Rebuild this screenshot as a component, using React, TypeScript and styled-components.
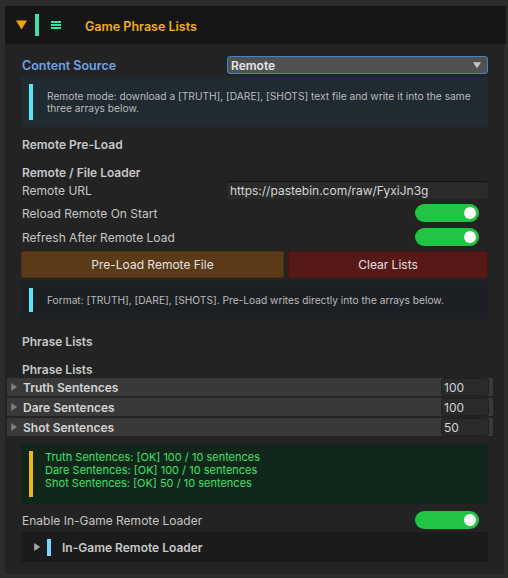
import styled, { createGlobalStyle } from "styled-components";

const Global = createGlobalStyle`
  html, body {
    margin: 0;
    padding: 0;
    background: #2c2c2c;
  }
  body {
    font-family: Inter, "Noto Sans", "Liberation Sans", sans-serif;
    -webkit-font-smoothing: antialiased;
  }
`

const Page = styled.div`
  width: 508px;
  height: 578px;
  padding: 6px 0 0 5px;
  box-sizing: border-box;
  display: flex;
  align-items: flex-start;
`

const Panel = styled.div`
  width: 499px;
  display: flex;
  flex-direction: column;
`

const Header = styled.div`
  height: 38px;
  width: 501px;
  background: #161616;
  display: flex;
  align-items: center;
`

const HeaderIcon = styled.svg`
  margin-left: 11px;
  flex: none;
`

const AccentBar = styled.div<{ $color: string; $h: number }>`
  width: 4px;
  height: ${p => p.$h}px;
  background: ${p => p.$color};
  flex: none;
`

const Burger = styled.div`
  width: 10px;
  height: 8px;
  margin-left: 12px;
  display: flex;
  flex-direction: column;
  justify-content: space-between;
  span {
    display: block;
    height: 2px;
    background: #3fe0a2;
  }
`

const Title = styled.div`
  margin-left: 24px;
  padding-top: 2px;
  color: #f3ae16;
  font-size: 12.5px;
  font-weight: 600;
`

const Body = styled.div`
  background: #232323;
  padding: 12px 16px 12px 16px;
  display: flex;
  flex-direction: column;
`

const FieldRow = styled.div<{ $top?: number }>`
  display: grid;
  grid-template-columns: 206px 1fr;
  align-items: center;
  height: 18px;
  margin-top: ${p => p.$top ?? 0}px;
`

const Label = styled.div<{ $accent?: boolean }>`
  font-size: ${p => (p.$accent ? 12.5 : 12)}px;
  font-weight: ${p => (p.$accent ? 600 : 400)};
  color: ${p => (p.$accent ? "#6fa2e6" : "#c6c6c6")};
  padding-left: 1px;
  white-space: nowrap;
`

const Dropdown = styled.div`
  height: 18px;
  box-sizing: border-box;
  border: 1px solid #4482cc;
  border-radius: 3px;
  background: #515151;
  display: flex;
  align-items: center;
  justify-content: space-between;
  padding: 0 6px 0 3px;
  color: #e6e6e6;
  font-size: 12px;
  font-weight: 600;
`

const TextField = styled.div`
  height: 18px;
  box-sizing: border-box;
  background: #2a2a2a;
  border-top: 1px solid #141414;
  border-radius: 2px;
  padding: 0 3px;
  display: flex;
  align-items: center;
  color: #d6d6d6;
  font-size: 12px;
`

const Toggle = styled.div`
  justify-self: end;
  margin-right: 9px;
  width: 64px;
  height: 18px;
  border-radius: 9px;
  background: #22c443;
  display: flex;
  align-items: center;
  justify-content: flex-end;
  padding-right: 3px;
  box-sizing: border-box;
  &::after {
    content: "";
    width: 12px;
    height: 12px;
    border-radius: 50%;
    background: #fff;
  }
`

const HelpBox = styled.div<{ $bg: string; $bar: string; $h: number; $top: number }>`
  margin-top: ${p => p.$top}px;
  height: ${p => p.$h}px;
  background: ${p => p.$bg};
  display: flex;
  align-items: center;
  padding: 0 8px;
  box-sizing: border-box;
  &::before {
    content: "";
    flex: none;
    align-self: stretch;
    margin: 7px 0;
    width: 4px;
    background: ${p => p.$bar};
  }
`

const HelpText = styled.div<{ $color?: string; $size?: number; $gap?: number; $indent?: number; $lift?: number }>`
  margin-left: ${p => p.$indent ?? 14}px;
  margin-bottom: ${p => p.$lift ?? 0}px;
  color: ${p => p.$color ?? "#bcbcbc"};
  font-size: ${p => p.$size ?? 10.2}px;
  line-height: ${p => p.$gap ?? 12}px;
`

const Heading = styled.div<{ $top: number; $h?: number }>`
  margin-top: ${p => p.$top}px;
  height: ${p => p.$h ?? 18}px;
  display: flex;
  align-items: center;
  padding-left: 1px;
  color: #c8c8c8;
  font-size: 12px;
  font-weight: 600;
`

const ButtonRow = styled.div`
  margin-top: 5px;
  display: grid;
  grid-template-columns: 263px 1fr;
  gap: 4px;
`

const Button = styled.div<{ $bg: string }>`
  height: 27px;
  border-radius: 2px;
  background: ${p => p.$bg};
  box-shadow: inset 0 0 0 1px rgba(0, 0, 0, 0.18);
  display: flex;
  align-items: center;
  justify-content: center;
  color: #e2e2e2;
  font-size: 12px;
`

const ListRows = styled.div`
  margin: 0 -5px 0 -14px;
  display: flex;
  flex-direction: column;
  gap: 2px;
`

const ListRow = styled.div`
  height: 18px;
  background: #393939;
  display: flex;
  align-items: center;
  padding-left: 3px;
`

const RowName = styled.div`
  flex: 1;
  margin-left: 5px;
  color: #d4d4d4;
  font-size: 12px;
  font-weight: 600;
`

const Count = styled.div`
  width: 48px;
  height: 18px;
  box-sizing: border-box;
  margin-right: 4px;
  background: #2a2a2a;
  border: 1px solid #202020;
  border-radius: 3px;
  display: flex;
  align-items: center;
  padding-left: 2px;
  color: #d4d4d4;
  font-size: 12px;
`

const Foldout = styled.div`
  margin-top: 3px;
  height: 30px;
  background: #1b1b1b;
  display: flex;
  align-items: center;
  padding-left: 12px;
`

const FoldoutTitle = styled.div`
  margin-left: 11px;
  color: #c8c8c8;
  font-size: 12px;
  font-weight: 600;
`

const Arrow = ({ size, color, dir }: { size: number; color: string; dir: "down" | "right" }) => (
  <svg width={size} height={size} viewBox="0 0 10 10" style={{ flex: "none" }}>
    {dir === "down"
      ? <polygon points="0,1.5 10,1.5 5,9" fill={color} />
      : <polygon points="1.5,0 9,5 1.5,10" fill={color} />}
  </svg>
)

const lists = [
  { name: "Truth Sentences", count: 100 },
  { name: "Dare Sentences", count: 100 },
  { name: "Shot Sentences", count: 50 },
]

export default function App() {
  return (
    <Page>
      <Global />
      <Panel>
        <Header>
          <HeaderIcon width="11" height="10" viewBox="0 0 11 10">
            <polygon points="0,0.5 11,0.5 5.5,9.5" fill="#f4a400" />
          </HeaderIcon>
          <div style={{ width: 8 }} />
          <AccentBar $color="#3fe0a2" $h={22} />
          <Burger><span /><span /><span /></Burger>
          <Title>Game Phrase Lists</Title>
        </Header>
        <Body>
          <FieldRow>
            <Label $accent>Content Source</Label>
            <Dropdown>
              <span>Remote</span>
              <Arrow size={8} color="#c8c8c8" dir="down" />
            </Dropdown>
          </FieldRow>
          <HelpBox $bg="#1f2a31" $bar="#4ee8f6" $h={50} $top={3}>
            <HelpText>
              Remote mode: download a [TRUTH], [DARE], [SHOTS] text file and write it into the same
              <br />three arrays below.
            </HelpText>
          </HelpBox>

          <Heading $top={8}>Remote Pre-Load</Heading>
          <Heading $top={11} $h={17}>Remote / File Loader</Heading>
          <FieldRow>
            <Label>Remote URL</Label>
            <TextField>https://pastebin.com/raw/FyxiJn3g</TextField>
          </FieldRow>
          <FieldRow $top={5}>
            <Label>Reload Remote On Start</Label>
            <Toggle />
          </FieldRow>
          <FieldRow $top={6}>
            <Label>Refresh After Remote Load</Label>
            <Toggle />
          </FieldRow>
          <ButtonRow>
            <Button $bg="#5b3a17">Pre-Load Remote File</Button>
            <Button $bg="#571818">Clear Lists</Button>
          </ButtonRow>
          <HelpBox $bg="#1c1f23" $bar="#4ee8f6" $h={38} $top={3}>
            <HelpText>Format: [TRUTH], [DARE], [SHOTS]. Pre-Load writes directly into the arrays below.</HelpText>
          </HelpBox>

          <Heading $top={13}>Phrase Lists</Heading>
          <Heading $top={11} $h={17}>Phrase Lists</Heading>
          <ListRows>
            {lists.map(l => (
              <ListRow key={l.name}>
                <Arrow size={8} color="#7c7c7c" dir="right" />
                <RowName>{l.name}</RowName>
                <Count>{l.count}</Count>
              </ListRow>
            ))}
          </ListRows>
          <HelpBox $bg="#10261a" $bar="#f4b420" $h={60} $top={8}>
            <HelpText $color="#3fe26a" $size={11} $gap={13} $indent={12} $lift={7}>
              {lists.map(l => (
                <div key={l.name}>{l.name}: [OK] {l.count} / 10 sentences</div>
              ))}
            </HelpText>
          </HelpBox>

          <FieldRow $top={7}>
            <Label>Enable In-Game Remote Loader</Label>
            <Toggle />
          </FieldRow>
          <Foldout>
            <Arrow size={8} color="#a6a6a6" dir="right" />
            <div style={{ width: 6 }} />
            <AccentBar $color="#82d2ff" $h={17} />
            <FoldoutTitle>In-Game Remote Loader</FoldoutTitle>
          </Foldout>
        </Body>
      </Panel>
    </Page>
  )
}
